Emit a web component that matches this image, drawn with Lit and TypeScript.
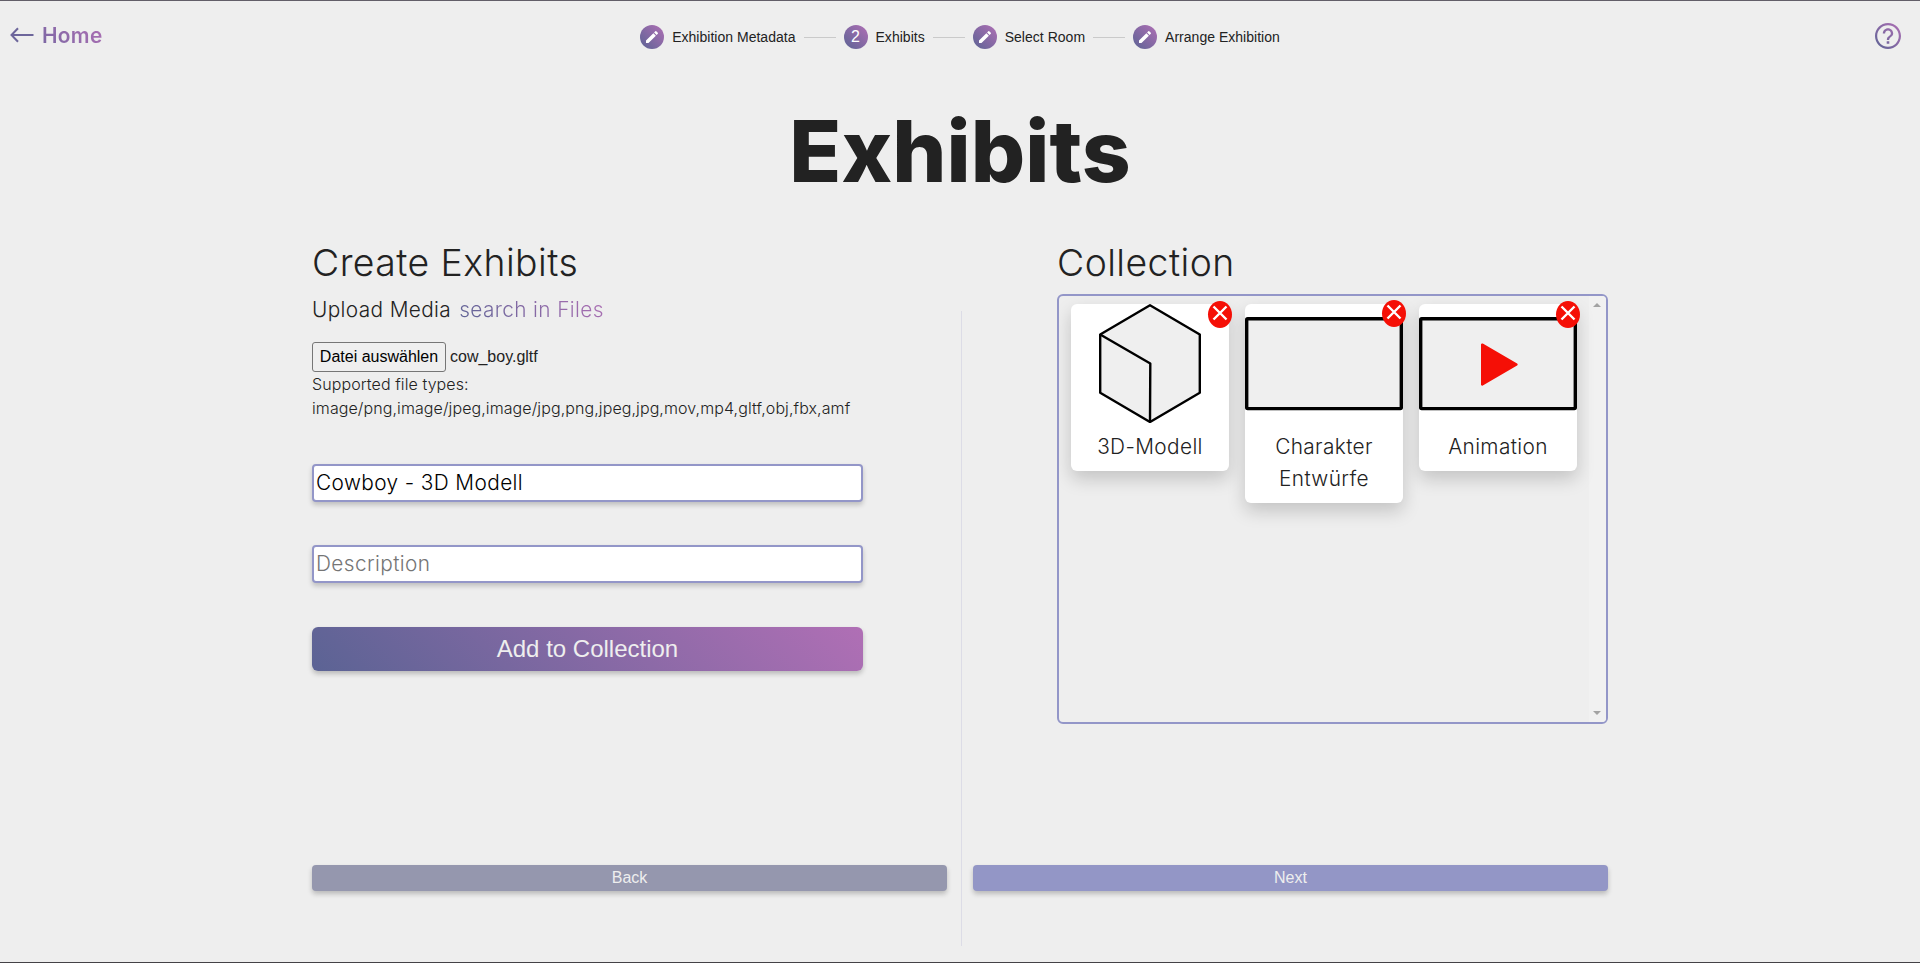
import { LitElement, html, css, svg } from "lit";
import { customElement } from "lit/decorators.js";

const pencil = svg`<path fill="#fff" d="M3 17.25V21h3.75L17.81 9.94l-3.75-3.75L3 17.25zM20.71 7.04a1 1 0 0 0 0-1.41l-2.34-2.34a1 1 0 0 0-1.41 0l-1.83 1.83 3.75 3.75 1.83-1.83z"/>`;

const cube = svg`
  <g fill="#efefef" stroke="#000" stroke-width="2.4" stroke-linejoin="round">
    <path d="M79 1.3 128.8 30.5V88.8L79 118 29.2 88.8V30.5Z"/>
    <path d="M29.2 30.5 79.3 59.5 79 118" fill="none"/>
  </g>`;

const frame = svg`<rect x="1.7" y="14.7" width="154.6" height="89.9" rx="1" fill="#efefef" stroke="#000" stroke-width="3.4"/>`;

const play = svg`<path d="M63.2 40.6 97.500 60.5 63.2 80.400Z" fill="#f50f06" stroke="#f50f06" stroke-width="2.4" stroke-linejoin="round"/>`;

const steps = ["Exhibition Metadata", "Exhibits", "Select Room", "Arrange Exhibition"];
const current = 1;

const exhibits = [
  { name: "3D-Modell", art: cube, cls: "" },
  { name: "Charakter Entwürfe", art: frame, cls: "raised" },
  { name: "Animation", art: svg`${frame}${play}`, cls: "" },
];

@customElement("app-root")
export class AppRoot extends LitElement {
  static styles = css`
    :host {
      display: block;
      height: 963px;
      box-sizing: border-box;
      border-top: 1px solid #625e68;
      border-bottom: 1px solid #444246;
      background: #eee;
      color: #222;
      font: 340 20.8px/32px Inter, sans-serif;
      letter-spacing: 0.38px;
      overflow: hidden;
    }
    * { box-sizing: border-box; }
    .header {
      height: 70px;
      display: grid;
      grid-template-columns: 1fr auto 1fr;
      align-items: start;
    }
    .home {
      display: flex;
      align-items: center;
      gap: 8px;
      padding: 19px 0 0 10px;
      font-weight: 600;
      letter-spacing: 0.35px;
    }
    .home svg { margin-top: -2px; }
    .grad {
      background: linear-gradient(45deg, #5b6394, #b06fb5);
      -webkit-background-clip: text;
      background-clip: text;
      color: transparent;
    }
    .home .grad { background-image: linear-gradient(45deg, #7767a2 0%, #b06fb5 100%); }
    .stepper {
      display: flex;
      align-items: center;
      padding-top: 24px;
      font: 14px/24px "Liberation Sans", Arial, sans-serif;
      letter-spacing: 0.02px;
      color: #222;
    }
    .step { display: flex; align-items: center; gap: 8px; }
    .dot {
      width: 24px;
      height: 24px;
      border-radius: 50%;
      display: flex;
      align-items: center;
      justify-content: center;
      background: linear-gradient(45deg, #5b6394, #b06fb5);
      color: #fff;
      font-size: 16px;
    }
    .line { width: 32px; height: 1px; margin: 0 8px; background: #cacaca; }
    .help { justify-self: end; padding: 22px 19px 0 0; line-height: 0; }
    h1 {
      margin: 20px 0 0;
      text-align: center;
      font-size: 85.33px;
      line-height: 120px;
      font-weight: 800;
      letter-spacing: 0.1px;
    }
    .main {
      display: grid;
      grid-template-columns: 551px 1px 551px;
      justify-content: space-between;
      width: 1296px;
      height: 635px;
      margin: 19px auto 0;
    }
    .shell { display: grid; grid-template-columns: 635px 635px; justify-content: space-between; width: 1296px; margin: 0 auto; }
    h2 { margin: 0; padding-top: 1px; height: 64px; font-size: 37.33px; line-height: 64px; font-weight: 320; letter-spacing: 0.45px; }
    .upload { display: flex; gap: 8px; line-height: 32px; }
    .file {
      display: flex;
      align-items: center;
      gap: 4px;
      margin-top: 16px;
      font: 16px/30px "Liberation Sans", Arial, sans-serif;
      letter-spacing: 0;
    }
    .choose {
      width: 134px;
      height: 30px;
      padding: 0;
      border: 1px solid #767676;
      border-radius: 3px;
      background: #efefef;
      color: #000;
      font: 16px "Liberation Sans", Arial, sans-serif;
    }
    .types { font-size: 16px; line-height: 24px; letter-spacing: 0.09px; margin-bottom: 44px; white-space: nowrap; }
    .field {
      display: block;
      width: 551px;
      height: 38px;
      margin-bottom: 43px;
      padding: 0 2px 1px;
      border: 2px solid #9396c8;
      border-radius: 4px;
      background: #fff;
      color: #000;
      font: 340 20.8px Inter, sans-serif;
      letter-spacing: 0.4px;
      box-shadow: 0 3px 5px rgba(0, 0, 0, 0.2);
      outline: none;
    }
    .field::placeholder { color: #757575; }
    button { letter-spacing: 0; white-space: nowrap; }
    .add {
      display: block;
      width: 551px;
      height: 44px;
      margin-top: 44px;
      border: 0;
      border-radius: 6px;
      background: linear-gradient(45deg, #5b6394, #b06fb5);
      color: #eee;
      font: 24px "Liberation Sans", Arial, sans-serif;
      box-shadow: 0 3px 5px rgba(0, 0, 0, 0.22);
    }
    .divider { background: #dcdce6; margin: 81px -1px 0 1px; height: 635px; }
    .box {
      display: grid;
      grid-template-columns: 1fr 17px;
      height: 430px;
      border: 2px solid #9396c8;
      border-radius: 6px;
      overflow: hidden;
    }
    .cards { display: flex; align-items: flex-start; gap: 16px; padding: 8px 12px; }
    .card {
      position: relative;
      width: 158px;
      padding-bottom: 8px;
      border-radius: 6px;
      background: #fff;
      box-shadow: 0 8px 18px rgba(0, 0, 0, 0.18);
      text-align: center;
    }
    .card svg { display: block; }
    .label { padding: 8px 16px 0; }
    .card .close {
      position: absolute;
      top: -3px;
      right: -3px;
      width: 24px;
      height: 27px;
      border-radius: 50%;
      background: #f50f06;
    }
    .card .raised { top: -4px; }
    .bar { background: #f1f1f1; display: flex; flex-direction: column; justify-content: space-between; align-items: center; padding: 7px 1px 7px 0; }
    .nav {
      height: 26px;
      padding: 0;
      border: 0;
      border-radius: 4px;
      color: #eee;
      background: #9396c6;
      font: 16px "Liberation Sans", Arial, sans-serif;
      box-shadow: 0 3px 5px rgba(0, 0, 0, 0.22);
    }
    .back { background: #9597ae; }
  `;

  render() {
    return html`
      <header class="header">
        <div class="home">
          <svg width="24" height="16" viewBox="0 0 24 16" fill="none" stroke="#6d669b" stroke-width="2"><path d="M23.5 8H1.5M8 1.2 1.5 8 8 14.8"/></svg>
          <span class="grad">Home</span>
        </div>
        <nav class="stepper">
          ${steps.map((s, i) => html`
            ${i ? html`<span class="line"></span>` : ""}
            <div class="step">
              <span class="dot">${i === current ? i + 1 : html`<svg width="16" height="16" viewBox="0 0 24 24">${pencil}</svg>`}</span>
              <span>${s}</span>
            </div>`)}
        </nav>
        <div class="help">
          <svg width="26" height="26" viewBox="2 2 20 20">
            <defs><linearGradient id="g" x1="0" y1="1" x2="1" y2="0"><stop stop-color="#5b6394"/><stop offset="1" stop-color="#b06fb5"/></linearGradient></defs>
            <path fill="url(#g)" d="M11 18h2v-2h-2v2zm1-16C6.480 2 2 6.480 2 12s4.480 10 10 10 10-4.480 10-10S17.520 2 12 2zm0 18.300c-4.580 0-8.300-3.720-8.300-8.300S7.420 3.700 12 3.700s8.300 3.720 8.300 8.300-3.720 8.300-8.300 8.300zM12 6c-2.210 0-4 1.790-4 4h1.800c0-1.210 .990-2.200 2.200-2.200s2.200 .990 2.200 2.200c0 2-3.100 1.800-3.100 5h1.800c0-2.250 3.100-2.500 3.100-5 0-2.210-1.790-4-4-4z"/>
          </svg>
        </div>
      </header>
      <h1>Exhibits</h1>
      <main class="main">
        <section>
          <h2>Create Exhibits</h2>
          <div class="upload"><span>Upload Media</span><span class="grad">search in Files</span></div>
          <div class="file"><button class="choose">Datei auswählen</button><span>cow_boy.gltf</span></div>
          <div class="types">Supported file types:<br />image/png,image/jpeg,image/jpg,png,jpeg,jpg,mov,mp4,gltf,obj,fbx,amf</div>
          <input class="field" .value=${"Cowboy - 3D Modell"} />
          <input class="field" placeholder="Description" />
          <button class="add">Add to Collection</button>
        </section>
        <div class="divider"></div>
        <section>
          <h2>Collection</h2>
          <div class="box">
            <div class="cards">
              ${exhibits.map((e) => html`
                <article class="card">
                  <svg width="158" height="119" viewBox="0 0 158 119">${e.art}</svg>
                  <div class="label">${e.name}</div>
                  <svg class="close ${e.cls}" viewBox="0 0 24 27"><path d="M5.500 5.500 18.500 18.500M18.500 5.500 5.500 18.500" stroke="#fff" stroke-width="2.400"/></svg>
                </article>`)}
            </div>
            <div class="bar">
              <svg width="8" height="4"><path d="M0 4 4 0 8 4Z" fill="#a3a3a3"/></svg>
              <svg width="8" height="4"><path d="M0 0 4 4 8 0Z" fill="#a3a3a3"/></svg>
            </div>
          </div>
        </section>
      </main>
      <div class="shell">
        <button class="nav back">Back</button>
        <button class="nav">Next</button>
      </div>
    `;
  }
}
